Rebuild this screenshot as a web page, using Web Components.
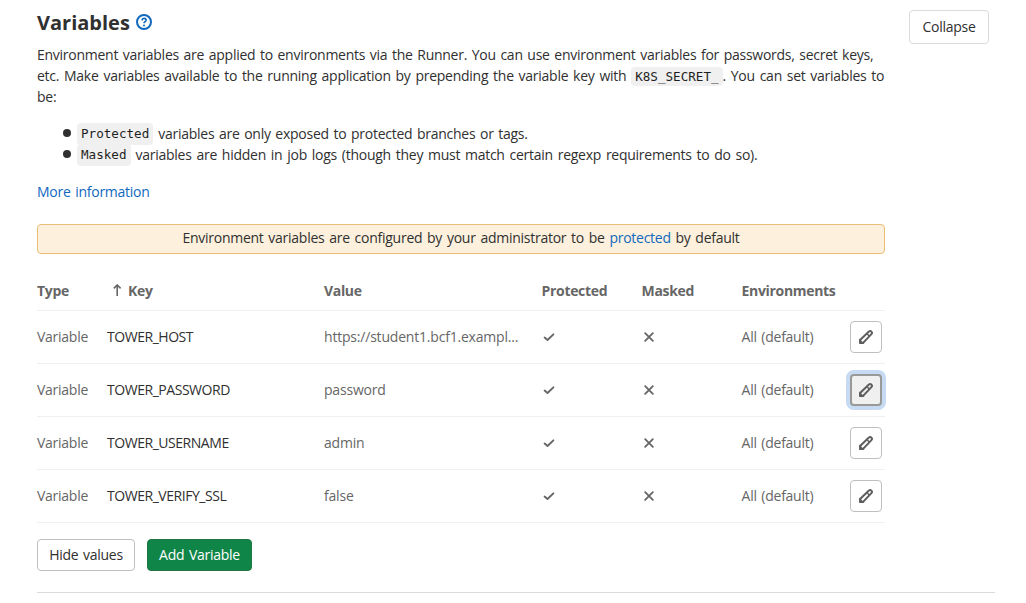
<!DOCTYPE html>
<html lang="en">
<head>
<meta charset="utf-8">
<title>Variables</title>
<style>
body { margin: 0; background: #fff; color: #303030; font: 14px/21px "Open Sans", "Noto Sans", sans-serif; letter-spacing: -.26px; word-spacing: 1.26px; }
</style>
</head>
<body>
<settings-section></settings-section>
<script>
const define = (name, html, setup) => customElements.define(name, class extends HTMLElement {
  connectedCallback() {
    if (this.shadowRoot) return;
    const root = this.attachShadow({ mode: 'open' });
    root.innerHTML = html;
    if (setup) setup(this, root);
  }
});

const icons = {
  check: '<path d="M3 8.6 6.3 11.4 13 5" fill="none" stroke="currentColor" stroke-width="2.2" stroke-linecap="round" stroke-linejoin="round"/>',
  close: '<path d="M3.6 3.6 12.4 12.4M12.4 3.6 3.6 12.4" fill="none" stroke="currentColor" stroke-width="2.1" stroke-linecap="round"/>',
  pencil: '<path d="M2.1 13.9V10.9L10.9 2.6a1.7 1.7 0 0 1 2.5 2.5L5.1 13.9Z" fill="none" stroke="currentColor" stroke-width="2" stroke-linejoin="round"/><path d="M8.8 4.6 11.4 7.2M2 11.2 4.8 14H2Z" fill="currentColor" stroke="currentColor" stroke-width="1.4"/>',
  question: '<circle cx="8" cy="8" r="7" fill="none" stroke="currentColor" stroke-width="2"/><path d="M5.9 6.3C6.1 4.9 7 4.4 8 4.4c1.2 0 2.1.7 2.1 1.8C10.1 7.6 8 7.7 8 9.3" fill="none" stroke="currentColor" stroke-width="1.6"/><circle cx="8" cy="11.6" r="1"  fill="currentColor"/>'
};

define('ui-icon', '<style>:host{display:inline-block;width:16px;height:16px}svg{display:block;width:100%;height:100%}</style><svg viewBox="0 0 16 16"></svg>',
  (el, root) => { root.querySelector('svg').innerHTML = icons[el.getAttribute('name')]; });

define('ui-button', `<style>
:host{display:inline-flex;flex:none}
button{all:unset;box-sizing:border-box;display:flex;align-items:center;justify-content:center;width:100%;height:100%;padding-bottom:2px;border:1px solid #bfbfbf;border-radius:4px;background:#fff;color:#303030;white-space:nowrap}
:host([kind=confirm]) button{background:#108548;border-color:#217645;color:#fff}
:host([kind=light]) button{border-color:#dbdbdb}
:host([kind=icon]){width:32px;height:32px}
:host([kind=icon]) button{color:#5e5e5e;padding:0}
:host([active]) button{background:#f0f0f0;border:2px solid #999;box-shadow:0 0 0 4px #c6daf2}
</style><button><slot></slot></button>`);

define('ui-code', `<style>:host{display:inline;font:12.6px/18px "DejaVu Sans Mono",monospace;letter-spacing:0;word-spacing:0;background:#f0f0f0;color:#1f1f1f;border-radius:4px;padding:2px 4px}</style><slot></slot>`);

define('ui-link', `<style>a{color:#1068bf;text-decoration:none}</style><a><slot></slot></a>`);

define('ui-alert', `<style>:host{display:block;box-sizing:border-box;height:30px;line-height:26px;text-align:center;word-spacing:1.4px;background:#fdf1dd;border:1px solid #e9be74;border-radius:4px}</style><slot></slot>`);

define('variable-row', `<style>
:host{display:grid;grid-template-columns:70px 217px 217.6px 100px 100px 108.4px 35px;align-items:center;height:52px;border-bottom:1px solid #f0f0f0;color:#666;white-space:nowrap}
span{padding-bottom:2px}
.key{color:#303030;letter-spacing:-.46px}
.value{letter-spacing:-.2px}
ui-icon{display:block;width:14px;height:14px}
ui-button ui-icon{width:16px;height:16px}
</style><span>Variable</span><span class="key"></span><span class="value"></span><ui-icon name="check"></ui-icon><ui-icon name="close"></ui-icon><span>All (default)</span><ui-button kind="icon"><ui-icon name="pencil"></ui-icon></ui-button>`,
  (el, root) => {
    root.querySelector('.key').textContent = el.getAttribute('key');
    root.querySelector('.value').textContent = el.getAttribute('value');
    if (el.hasAttribute('active')) root.querySelector('ui-button').setAttribute('active', '');
  });

define('variable-table', `<style>
:host{display:block}
.head{display:grid;grid-template-columns:70px 217px 217.6px 100px 100px 143.4px;height:38px;line-height:38px;border-bottom:1px solid #f0f0f0;color:#666;font-weight:700;letter-spacing:-.33px}
.key{display:flex;padding-left:5px}
.key svg{width:10px;height:12px;margin:12px 6px 0 0}
</style>
<div class="head"><span>Type</span><span class="key"><svg viewBox="0 0 10 12"><path d="M5.2 12V1M1.8 4.4 5.2 1 8.6 4.4" fill="none" stroke="currentColor" stroke-width="1.6"/></svg>Key</span><span>Value</span><span>Protected</span><span>Masked</span><span>Environments</span></div>
<slot></slot>`);

define('settings-section', `<style>
:host{display:block;box-sizing:border-box;width:958px;margin-left:37px;height:593px;border-bottom:1px solid #dbdbdb}
header{display:flex;justify-content:space-between;height:44px;padding-right:6px}
h4{display:flex;margin:0;padding-top:9px;font-size:20px;line-height:28px;letter-spacing:0}
h4 ui-icon{color:#1068bf;margin:5px 0 0 6px}
header ui-button{width:80px;height:34px;margin-top:10px}
main{width:848px}
p{margin:0;white-space:nowrap}
.wide{word-spacing:1.45px}
ul{margin:16px 0;padding-left:41px;white-space:nowrap;list-style:none}
li{display:flex;align-items:center;height:21px}
li::before{content:"";width:8px;height:8px;border-radius:50%;background:#303030;margin:0 6px 2px -15px}
li ui-code{position:relative;top:.5px}
li span{margin-left:5px}
ui-alert{margin:22px 0 18px}
footer{display:flex;gap:12px;margin-top:16px}
footer ui-button{height:32px}
</style>
<header><h4>Variables<ui-icon name="question"></ui-icon></h4><ui-button kind="light">Collapse</ui-button></header>
<main>
<p>Environment variables are applied to environments via the Runner. You can use environment variables for passwords, secret keys,<br><span class="wide">etc. Make variables available to the running application by prepending the variable key with <ui-code>K8S_SECRET_</ui-code>. You can set variables to</span><br>be:</p>
<ul><li><ui-code>Protected</ui-code><span>variables are only exposed to protected branches or tags.</span></li><li><ui-code>Masked</ui-code><span class="wide">variables are hidden in job logs (though they must match certain regexp requirements to do so).</span></li></ul>
<p><ui-link>More information</ui-link></p>
<ui-alert>Environment variables are configured by your administrator to be <ui-link>protected</ui-link> by default</ui-alert>
<variable-table>
<variable-row key="TOWER_HOST" value="https://student1.bcf1.exampl..."></variable-row>
<variable-row key="TOWER_PASSWORD" value="password" active></variable-row>
<variable-row key="TOWER_USERNAME" value="admin"></variable-row>
<variable-row key="TOWER_VERIFY_SSL" value="false"></variable-row>
</variable-table>
<footer><ui-button style="width:98px">Hide values</ui-button><ui-button kind="confirm" style="width:105px">Add Variable</ui-button></footer>
</main>`);
</script>
</body>
</html>
